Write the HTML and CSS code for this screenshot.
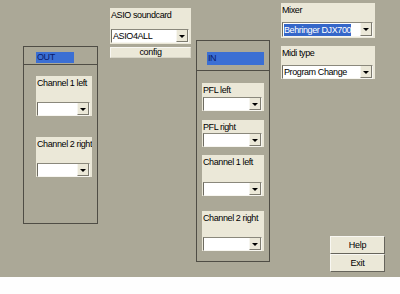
FILE: index.html
```html
<!DOCTYPE html>
<html>
<head>
<meta charset="utf-8">
<link rel="stylesheet" href="styles.css">
</head>
<body>
<div class="app">
  <section class="col col-out">
    <div class="group group-out">
      <div class="group-head head-out"><span class="tag tag-out">OUT</span></div>
      <div class="field out-1"><span class="label">Channel 1 left</span><div class="select"><span class="value"></span><span class="arrow"></span></div></div>
      <div class="field out-2"><span class="label">Channel 2 right</span><div class="select"><span class="value"></span><span class="arrow"></span></div></div>
    </div>
  </section>

  <section class="col col-asio">
    <div class="field asio"><span class="label">ASIO soundcard</span><div class="select"><span class="value">ASIO4ALL</span><span class="arrow"></span></div></div>
    <button class="btn btn-config">config</button>
  </section>

  <section class="col col-in">
    <div class="group group-in">
      <div class="group-head head-in"><span class="tag tag-in">IN</span></div>
      <div class="field in-1"><span class="label">PFL left</span><div class="select"><span class="value"></span><span class="arrow"></span></div></div>
      <div class="field in-2"><span class="label">PFL right</span><div class="select"><span class="value"></span><span class="arrow"></span></div></div>
      <div class="field in-3"><span class="label">Channel 1 left</span><div class="select"><span class="value"></span><span class="arrow"></span></div></div>
      <div class="field in-4"><span class="label">Channel 2 right</span><div class="select"><span class="value"></span><span class="arrow"></span></div></div>
    </div>
  </section>

  <section class="col col-mixer">
    <div class="field mixer"><span class="label">Mixer</span><div class="select sel-tall"><span class="value"><span class="hl">Behringer DJX700</span></span><span class="arrow"></span></div></div>
    <div class="field midi"><span class="label">Midi type</span><div class="select"><span class="value">Program Change</span><span class="arrow"></span></div></div>
    <div class="actions">
      <button class="btn btn-big">Help</button>
      <button class="btn btn-big">Exit</button>
    </div>
  </section>
</div>
<div class="footer"></div>
</body>
</html>
```

FILE: styles.css
```css
html, body {
  margin: 0;
  padding: 0;
  background: #ffffff;
}

body {
  font-family: "Liberation Sans", Arial, sans-serif;
  font-size: 9px;
  letter-spacing: -0.4px;
  color: #000;
}

.app {
  display: flex;
  height: 277px;
  background: #aba897;
  padding-left: 23px;
  box-sizing: border-box;
}

.footer {
  height: 17px;
  background: #fefefe;
}

.col {
  display: flex;
  flex-direction: column;
}

/* group boxes */
.group {
  box-sizing: border-box;
  border: 1px solid #4f4d45;
  display: flex;
  flex-direction: column;
}

.group-out {
  margin-top: 46px;
  width: 75px;
  height: 178px;
}

.group-in {
  margin-top: 40px;
  width: 74px;
  height: 222px;
}

.group-head {
  border-bottom: 1px solid #4f4d45;
  display: flex;
}

.head-out {
  padding: 5px 0 1px 12px;
}

.head-in {
  padding: 11px 0 5px 10px;
}

.tag {
  display: block;
  background: #3b6fd4;
  color: #0a1a6a;
  line-height: 11px;
  padding-left: 1px;
  box-sizing: border-box;
}

.tag-out {
  width: 38px;
  height: 11px;
}

.tag-in {
  width: 57px;
  height: 13px;
  line-height: 13px;
}

/* fields */
.field {
  background: #ebe8d8;
  display: flex;
  flex-direction: column;
}

.label {
  display: block;
  padding: 2px 0 0 1px;
  line-height: 10px;
  white-space: nowrap;
  overflow: hidden;
  flex: 1;
}

.out-1 { margin: 11px 0 0 12px; width: 56px; height: 40px; }
.out-2 { margin: 21px 0 0 12px; width: 56px; height: 40px; }

.in-1 { margin: 12px 0 0 5px; width: 62px; height: 28px; }
.in-2 { margin: 9px 0 0 5px; width: 62px; height: 27px; }
.in-3 { margin: 8px 0 0 5px; width: 62px; height: 41px; }
.in-4 { margin: 15px 0 0 5px; width: 62px; height: 40px; }

.col-asio {
  margin-left: 12px;
  width: 81px;
}

.asio {
  margin-top: 8px;
  height: 36px;
  padding-bottom: 1px;
  box-sizing: border-box;
}

.col-in {
  margin-left: 5px;
}

.col-mixer {
  margin-left: 11px;
  width: 104px;
}

.mixer {
  margin-top: 3px;
  width: 94px;
  height: 35px;
  padding-bottom: 1px;
  box-sizing: border-box;
}

.midi {
  margin-top: 8px;
  width: 94px;
  height: 33px;
}

/* select */
.select {
  display: flex;
  box-sizing: border-box;
  height: 14px;
  margin: 0 2px 0 1px;
  background: #ffffff;
  border: 1px solid;
  border-color: #8a887c #f7f6f0 #f7f6f0 #6e6c62;
  flex: none;
}

.sel-tall {
  height: 15px;
}

.value {
  flex: 1;
  overflow: hidden;
  white-space: nowrap;
  line-height: 12px;
  padding-left: 1px;
  display: flex;
  align-items: center;
}

.hl {
  display: block;
  background: #3567c9;
  color: #ffffff;
  width: 67px;
  flex: none;
  overflow: hidden;
  white-space: nowrap;
  line-height: 12px;
}

.arrow {
  width: 12px;
  flex: none;
  background: #ebe8d8;
  border-left: 1px solid #f7f6f0;
  border-right: 1px solid #7d7b70;
  border-bottom: 1px solid #7d7b70;
  box-sizing: border-box;
  display: flex;
  align-items: center;
  justify-content: center;
}

.arrow::after {
  content: "";
  display: block;
  width: 0;
  height: 0;
  border-left: 3px solid transparent;
  border-right: 3px solid transparent;
  border-top: 3px solid #000;
  margin-top: 1px;
}

/* buttons */
.btn {
  font-family: "Liberation Sans", Arial, sans-serif;
  font-size: 9px;
  letter-spacing: -0.3px;
  color: #000;
  background: #ebe8d8;
  border: 1px solid;
  border-color: #f8f7f2 #66645b #66645b #f8f7f2;
  padding: 0;
  margin: 0;
  box-sizing: border-box;
  display: block;
}

.btn-config {
  margin-top: 3px;
  width: 81px;
  height: 11px;
  line-height: 9px;
  border-color: #f8f7f2 #d8d5c6 #d8d5c6 #f8f7f2;
}

.actions {
  margin-top: auto;
  margin-left: 49px;
  margin-bottom: 5px;
  display: flex;
  flex-direction: column;
}

.btn-big {
  width: 55px;
  height: 18px;
}
```
